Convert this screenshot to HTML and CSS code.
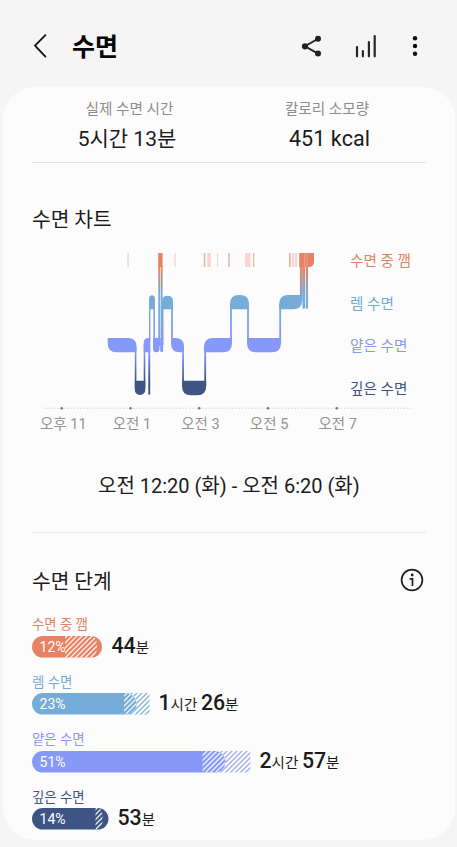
FILE: index.html
```html
<!DOCTYPE html>
<html lang="ko">
<head>
<meta charset="utf-8">
<title>수면</title>
<link rel="stylesheet" href="styles.css">
</head>
<body>
<header class="top">
  <svg class="back" width="16" height="28" viewBox="0 0 16 28"><path d="M13.4 3.2 3 13.6 13.4 24.6" fill="none" stroke="#151515" stroke-width="1.9" stroke-linecap="round" stroke-linejoin="round"/></svg>
  <h1>수면</h1>
  <svg class="share" width="22" height="24" viewBox="0 0 22 24"><path d="M17 4.8 4 12.3 17 19.6" fill="none" stroke="#222" stroke-width="1.9"/><g fill="#222"><circle cx="17" cy="4.8" r="3"/><circle cx="4" cy="12.3" r="3.1"/><circle cx="17" cy="19.6" r="3"/></g></svg>
  <svg class="stats" width="22" height="24" viewBox="0 0 22 24"><path d="M2 13.2v9.1M7.9 17v5.3M13.9 8v14.3M19.7 2.2v20.1" fill="none" stroke="#272727" stroke-width="2.2" stroke-linecap="round"/></svg>
  <svg class="more" width="6" height="24" viewBox="0 0 6 24" fill="#0c0c0c"><circle cx="3" cy="4.2" r="2.2"/><circle cx="3" cy="12" r="2.2"/><circle cx="3" cy="19.8" r="2.2"/></svg>
</header>
<main class="card">
  <section class="summary">
    <div class="metric"><span>실제 수면 시간</span><strong>5시간 13분</strong></div>
    <div class="metric"><span>칼로리 소모량</span><strong class="kcal">451 kcal</strong></div>
  </section>

  <section class="chart-section">
    <h2>수면 차트</h2>
    <div class="chart">
      <svg class="plot" width="308" height="158" viewBox="32 247 308 158">
        <defs>
          <linearGradient id="stage" gradientUnits="userSpaceOnUse" x1="0" y1="253" x2="0" y2="395">
            <stop offset="0" stop-color="#e78263"/><stop offset=".1" stop-color="#e78263"/>
            <stop offset=".3" stop-color="#75acd8"/><stop offset=".4" stop-color="#75acd8"/>
            <stop offset=".6" stop-color="#8799f8"/><stop offset=".7" stop-color="#8799f8"/>
            <stop offset=".895" stop-color="#3e5485"/><stop offset="1" stop-color="#3e5485"/>
          </linearGradient>
        </defs>
        <g fill="#e78263">
          <path opacity=".3" d="M127.2 253h1.7v14h-1.7zM174.3 253h1.4v14h-1.4zM207.2 253h3.7v14h-3.7zM217 253h1.2v14H217zM245 253h5.4v14H245zM292 253h2.1v14H292zM295 253h2v14h-2z"/>
          <path opacity=".6" d="M203.8 253h1.5v14h-1.5zM228.3 253h1.5v14h-1.5zM253 253h1.2v14H253zM289 253h1.8v14H289z"/>
        </g>
        <g fill="url(#stage)">
          <path d="M158.2 253h4.4v14h-4.4zM299.2 253h14.8v8.5q0 5.5-5.5 5.5h-9.3z"/>
          <path d="M149 309.3V299a3 3.7 0 0 1 6 0v10.3zM162.2 309.3V300a5.4 4.8 0 0 1 10.7 0v9.3zM230 309.3V304q0-9 9-9h1q9 0 9 9v5.3zM279.2 309.3V304q0-9 9-9h14v5.3q0 9-9 9z"/>
          <path d="M107.7 338H128q8.5 0 8.5 8.5v5.8h-20q-8.8 0-8.8-8.8zM143.7 352.3V343q0-5 5-5h1.5v14.3zM153 338h6.5v10.8a3.2 3.5 0 0 1-6.5 0zM160.2 338h2.9v12.6a1.4 1.7 0 0 1-2.9 0zM171 338h4.5q8.5 0 8.5 8.5v5.8h-4.5q-8.5 0-8.5-8.5zM204 352.3V347q0-9 9-9h19v5.3q0 9-9 9zM247 338h34v5.3q0 9-9 9h-16q-9 0-9-9z"/>
          <path d="M134.8 380.8h10.5v9.2a5.25 5 0 0 1-10.5 0zM182 380.8h24.2v5.4q0 9-9 9H191q-9 0-9-9z"/>
          <path d="M134.8 346h1.6v42h-1.6zM143.7 344h1.6v44h-1.6zM148.3 340h1.9v54q-.95 1.7-1.9 0zM149 300h1.4v42H149zM153.4 300h1.6v47h-1.6zM158.3 266h1.7v80h-1.7zM160.6 266h2v82h-2zM162.2 302h1.3v43h-1.3zM171.1 302h1.8v42h-1.8zM182.2 347h1.7v39h-1.7zM204.3 347h1.8v39h-1.8zM230.1 304h1.8v40h-1.8zM247.1 304h1.8v40h-1.8zM279.3 304h1.8v40h-1.8z"/>
          <path d="M299.9 266h2.4v35h-2.4zM302.5 266h2.5v42q-1.2 2-2.5 0zM305.8 266h2.2v42q-1.1 2-2.2 0z"/>
        </g>
        <path d="M304.6 253v14M307 253v14" stroke="#f7bda9" stroke-width=".5"/>
      </svg>
      <ul class="legend">
        <li class="awake">수면 중 깸</li><li class="rem">렘 수면</li><li class="light">얕은 수면</li><li class="deep">깊은 수면</li>
      </ul>
      <svg class="axis-line" width="380" height="6" viewBox="32 405 380 6"><path d="M43.8 408.2H412" stroke="#d0d0d0" stroke-width="1" stroke-dasharray="1.4 1.9"/><g fill="#777"><circle cx="61.7" cy="408.2" r="1.3"/><circle cx="130.5" cy="408.2" r="1.3"/><circle cx="199.2" cy="408.2" r="1.3"/><circle cx="268" cy="408.2" r="1.3"/><circle cx="336.8" cy="408.2" r="1.3"/></g></svg>
    </div>
    <div class="axis"><span>오후 11</span><span>오전 1</span><span>오전 3</span><span>오전 5</span><span>오전 7</span></div>
    <p class="period">오전 12:20 (화) - 오전 6:20 (화)</p>
  </section>

  <section class="stages">
    <div class="stages-head">
      <h2>수면 단계</h2>
      <svg width="24" height="24" viewBox="0 0 24 24"><circle cx="12" cy="12" r="10.4" fill="none" stroke="#202020" stroke-width="1.7"/><circle cx="12.2" cy="7" r="1.4" fill="#202020"/><path d="M9.7 10.8h2.8v7.2" fill="none" stroke="#202020" stroke-width="1.7"/></svg>
    </div>

    <div class="stage">
      <h3 class="awake">수면 중 깸</h3>
      <div class="row">
        <svg width="71" height="22" viewBox="0 0 71 22">
          <defs><pattern id="hatch-white" width="5" height="5" patternUnits="userSpaceOnUse"><path d="M-1 6 6-1M-1 1 1-1M4 6l2-2" stroke="#fff" stroke-opacity=".9" stroke-width="1.25"/></pattern></defs>
          <rect width="70" height="21.6" rx="10.8" fill="#e78263"/>
          <text x="7.6" y="15.8" class="pct">12%</text>
          <path d="M33 0h28q4.5 3 4 11t-4 10.6H33z" fill="url(#hatch-white)"/>
        </svg>
        <p><b>44</b>분</p>
      </div>
    </div>

    <div class="stage">
      <h3 class="rem">렘 수면</h3>
      <div class="row">
        <svg width="118" height="22" viewBox="0 0 118 22">
          <defs><pattern id="hatch-rem" width="5" height="5" patternUnits="userSpaceOnUse"><path d="M-1 6 6-1M-1 1 1-1M4 6l2-2" stroke="#82b4dc" stroke-width="1.35"/></pattern></defs>
          <path d="M92 0h25.5v21.6H92z" fill="url(#hatch-rem)"/>
          <rect width="104.5" height="21.6" rx="10.8" fill="#75acd8"/>
          <text x="7.6" y="15.8" class="pct">23%</text>
          <path d="M92 0h1.7a10.8 10.8 0 0 1 0 21.6H92z" fill="url(#hatch-white)"/>
        </svg>
        <p><b>1</b>시간 <b>26</b>분</p>
      </div>
    </div>

    <div class="stage">
      <h3 class="light">얕은 수면</h3>
      <div class="row">
        <svg width="219" height="22" viewBox="0 0 219 22">
          <defs><pattern id="hatch-light" width="5" height="5" patternUnits="userSpaceOnUse"><path d="M-1 6 6-1M-1 1 1-1M4 6l2-2" stroke="#a3abef" stroke-width="1.3"/></pattern></defs>
          <path d="M180 0h38.3v21.6H180z" fill="url(#hatch-light)"/>
          <rect width="193.5" height="21.6" rx="10.8" fill="#8799f8"/>
          <text x="7.6" y="15.8" class="pct">51%</text>
          <path d="M170.5 0h12.2a10.8 10.8 0 0 1 0 21.6h-12.2z" fill="url(#hatch-white)"/>
        </svg>
        <p><b>2</b>시간 <b>57</b>분</p>
      </div>
    </div>

    <div class="stage">
      <h3 class="deep">깊은 수면</h3>
      <div class="row">
        <svg width="77" height="22" viewBox="0 0 77 22">
          <rect width="76.5" height="21.6" rx="10.8" fill="#3e5485"/>
          <text x="7.6" y="15.8" class="pct">14%</text>
          <path d="M63.5 0h3.5q3.5 2 3.5 10.5T67 21.6h-3.5z" fill="url(#hatch-white)"/>
        </svg>
        <p><b>53</b>분</p>
      </div>
    </div>
  </section>
</main>
</body>
</html>
```

FILE: styles.css
```css
* { box-sizing: border-box; }
body {
  margin: 0;
  height: 847px;
  overflow: hidden;
  background: #f5f5f5;
  color: #1b1b1b;
  font-family: Roboto, "Noto Sans CJK KR", sans-serif;
  white-space: nowrap;
}
h1, h2, h3, p, ul { margin: 0; padding: 0; }
svg { display: block; flex: none; }

.top { display: flex; align-items: center; height: 87px; padding: 5px 39px 0 32px; }
.top h1 { margin-left: 24px; width: 50px; padding-top: 3px; font-size: 25px; line-height: 30px; font-weight: 700; color: #070707; }
.share { margin-left: 179px; }
.stats { margin-left: 32px; }
.more { margin-left: 35px; }

.card {
  width: 452px;
  height: 753px;
  margin-left: 3px;
  padding: 0 29px;
  border-radius: 32px;
  background: #fcfcfc;
}

.summary {
  display: grid;
  grid-template-columns: 190px 1fr;
  height: 76px;
  padding-top: 12px;
  border-bottom: 1px solid #e2e2e2;
}
.metric { display: flex; flex-direction: column; align-items: center; }
.metric span { margin-left: 5px; font-size: 14.6px; line-height: 20px; color: #8c8c8c; }
.metric strong { margin-top: 8px; font-size: 21px; line-height: 24px; font-weight: 400; }
.metric:last-child { padding-left: 6px; }
.metric:last-child span { margin-left: 0; }
.metric .kcal { margin-left: 5px; font-size: 21.5px; letter-spacing: .1px; }

h2 { font-size: 20.3px; line-height: 28px; font-weight: 400; }
.chart-section { height: 370px; border-bottom: 1px solid #e8e8e8; }
.chart-section h2 { padding-top: 43px; }
.chart { display: grid; grid-template-columns: 318px 1fr; grid-template-rows: 158px 6px; margin-top: 13px; }
.legend { list-style: none; padding-top: 3px; font-size: 14.6px; line-height: 22px; }
.legend li { margin-bottom: 20.6px; }
.axis-line { grid-column: 1 / 3; }
.axis { display: grid; grid-template-columns: repeat(5, 68.6px); margin: 3px 0 0 -3px; font-size: 14.5px; line-height: 22px; text-align: center; color: #939393; }
.period { margin-top: 36px; padding-left: 66px; font-size: 20px; line-height: 28px; }

.awake { color: #e08566; }
.rem { color: #73acd2; }
.light { color: #8998ee; }
.deep { color: #3e5485; }

.stages-head { display: flex; justify-content: space-between; align-items: center; height: 28px; margin: 33px 2px 20px 0; }
.stages-head h2 { padding-top: 3px; }
.stage { height: 57.6px; }
.stage h3 { height: 21.5px; padding-top: 1px; font-size: 13.4px; line-height: 20px; font-weight: 400; }
.row { display: flex; align-items: center; height: 22px; }
.row svg { margin-left: -.5px; }
.row p { margin-left: 9px; padding-top: 1px; font-size: 14.5px; line-height: 22px; }
.row b { font-size: 21.3px; font-weight: 500; }
.pct { font-size: 14px; fill: #fff; }
```
